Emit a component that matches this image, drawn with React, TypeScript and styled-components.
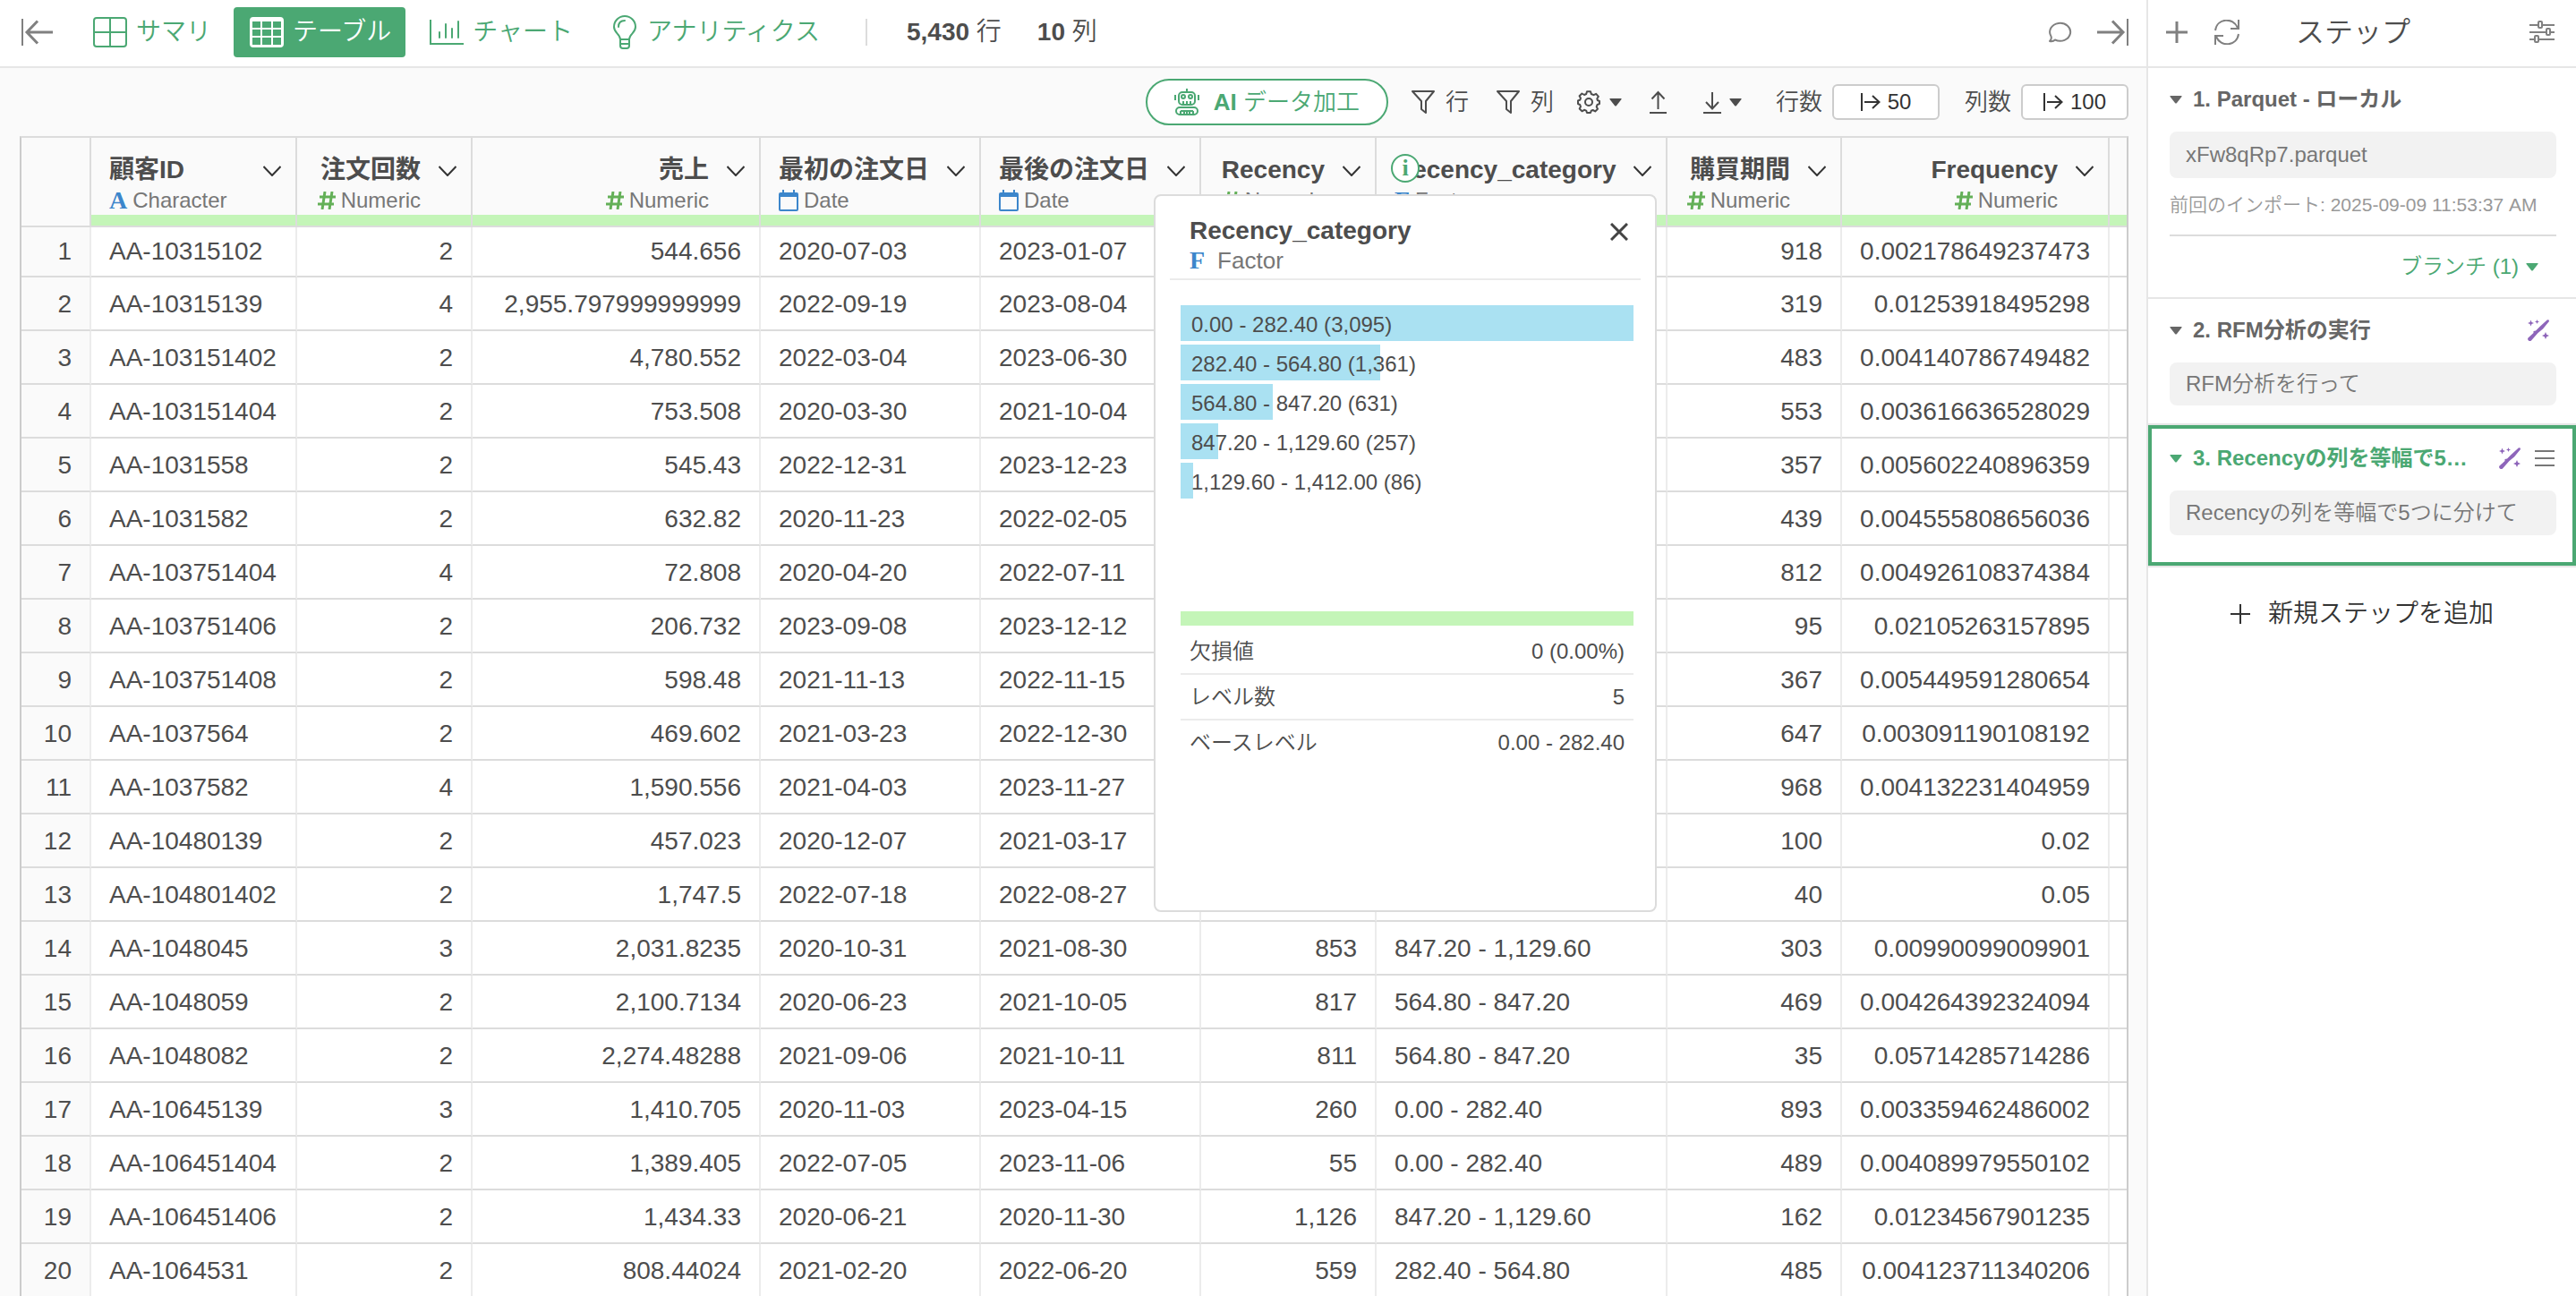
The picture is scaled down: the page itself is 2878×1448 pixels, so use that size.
import React from "react";
import styled, { createGlobalStyle, css } from "styled-components";

const color = {
  green: "#4ba873",
  text: "#4d4d4d",
  muted: "#777777",
  line: "#dcdcdc",
  soft: "#e6e6e6",
  blue: "#3c86cb",
  hash: "#64b058",
  valid: "#c4f5b8",
  bar: "#aae1f2",
  purple: "#8e65ba",
};

const GlobalStyle = createGlobalStyle`
  *, *::before, *::after { box-sizing: border-box; }
  body {
    margin: 0;
    background: #ffffff;
    color: ${color.text};
    font-family: "Liberation Sans", "Noto Sans CJK JP", sans-serif;
    font-size: 28px;
  }
  button {
    margin: 0;
    padding: 0;
    border: 0;
    background: none;
    color: inherit;
    font: inherit;
    cursor: pointer;
  }
  b { font-weight: 700; }
  svg { display: block; flex: none; }
  h1, h2, h3, p, ul, ol, dl, dd { margin: 0; padding: 0; }
`;

const Page = styled.div`
  display: grid;
  grid-template-columns: minmax(0, 1fr) 480px;
  height: 100vh;
  overflow: hidden;
`;

const Main = styled.main`
  display: flex;
  flex-direction: column;
  min-width: 0;
  overflow: hidden;
  background: #fafafa;
`;

const TopBar = styled.header`
  display: flex;
  align-items: center;
  flex: none;
  height: 76px;
  padding: 0 20px 2px 23px;
  border-bottom: 2px solid ${color.soft};
  background: #ffffff;
`;

const IconButton = styled.button`
  display: flex;
  align-items: center;
  color: #808080;
`;

const Tabs = styled.nav`
  display: flex;
  gap: 9px;
  margin-left: 27px;
`;

const Tab = styled.button<{ $active?: boolean }>`
  display: flex;
  align-items: center;
  gap: 10px;
  height: 56px;
  padding: 0 16px 0 18px;
  border-radius: 4px;
  line-height: 40px;
  font-weight: 350;
  color: ${(p) => (p.$active ? "#ffffff" : color.green)};
  background: ${(p) => (p.$active ? color.green : "transparent")};
`;

const Counts = styled.div`
  display: flex;
  align-items: center;
  gap: 40px;
  margin-left: 35px;
  line-height: 40px;
  font-weight: 350;
  &::before {
    content: "";
    width: 2px;
    height: 30px;
    margin-right: 4px;
    background: ${color.line};
  }
`;

const TopActions = styled.div`
  display: flex;
  align-items: center;
  gap: 27px;
  margin-left: auto;
`;

const Toolbar = styled.div`
  display: flex;
  align-items: center;
  justify-content: flex-end;
  gap: 26px;
  flex: none;
  height: 76px;
  padding-right: 20px;
  font-size: 26px;
  line-height: 36px;
  font-weight: 350;
`;

const AiButton = styled.button`
  display: flex;
  align-items: center;
  gap: 16px;
  height: 52px;
  padding: 0 30px;
  border: 2px solid ${color.green};
  border-radius: 26px;
  background: #ffffff;
  color: ${color.green};
`;

const ToolGroup = styled.div`
  display: flex;
  align-items: center;
  gap: 31px;
`;

const Tool = styled.button<{ $gap: number }>`
  display: flex;
  align-items: center;
  gap: ${(p) => p.$gap}px;
`;

const Limits = styled.div`
  display: flex;
  align-items: center;
  gap: 28px;
  padding-left: 12px;
`;

const Limit = styled.div`
  display: flex;
  align-items: center;
  gap: 11px;
`;

const LimitButton = styled.button`
  display: flex;
  align-items: center;
  justify-content: center;
  gap: 8px;
  width: 120px;
  height: 40px;
  border: 2px solid #cccccc;
  border-radius: 6px;
  background: #ffffff;
  color: #333333;
  font-size: 24px;
`;

const TableArea = styled.section`
  position: relative;
  flex: 1;
  min-height: 0;
  padding: 0 20px 0 22px;
`;

const Table = styled.table`
  width: 100%;
  table-layout: fixed;
  border-collapse: separate;
  border-spacing: 0;
  border: 2px solid ${color.line};
  border-left-color: #cccccc;
  border-right-color: #cccccc;
  background: #ffffff;
`;

const HeadCell = styled.th`
  position: relative;
  height: 100px;
  padding: 0;
  border-right: 2px solid ${color.line};
  border-bottom: 2px solid ${color.line};
  background: #fafafa;
  text-align: left;
  vertical-align: bottom;
  &:last-child { border-right: 0; }
`;

const HeadBody = styled.div`
  display: flex;
  flex-direction: column;
  height: 86px;
  padding-top: 18px;
`;

const HeadTitle = styled.div<{ $right?: boolean }>`
  display: flex;
  align-items: center;
  justify-content: ${(p) => (p.$right ? "flex-end" : "space-between")};
  gap: 20px;
  height: 36px;
  padding: 0 16px 0 20px;
  line-height: 36px;
  font-weight: 700;
  white-space: nowrap;
  button { padding-top: 2px; color: #333333; }
`;

const TypeLine = styled.div<{ $right?: boolean }>`
  display: flex;
  align-items: center;
  justify-content: ${(p) => (p.$right ? "flex-end" : "flex-start")};
  gap: 6px;
  height: 32px;
  padding: 0 56px 0 20px;
  color: ${color.muted};
  font-size: 24px;
  line-height: 32px;
  font-weight: 400;
`;

const ValidStrip = styled.div`
  height: 12px;
  background: ${color.valid};
`;

const Letter = styled.span`
  color: ${color.blue};
  font-family: "Liberation Serif", serif;
  font-weight: 700;
  font-size: 28px;
`;

const InfoBadge = styled.span`
  position: absolute;
  top: 18px;
  left: 16px;
  display: flex;
  align-items: center;
  justify-content: center;
  width: 32px;
  height: 32px;
  border: 2px solid ${color.green};
  border-radius: 50%;
  background: #ffffff;
  color: ${color.green};
  font-family: "Liberation Serif", serif;
  font-size: 26px;
  line-height: 28px;
  font-weight: 700;
`;

const Row = styled.tr`
  /* The first row sits slightly scrolled under the header. */
  &:first-child > * {
    height: 56px;
    padding-bottom: 2px;
  }
`;

const cell = css`
  height: 60px;
  padding: 2px 20px 0;
  border-bottom: 2px solid ${color.line};
  border-right: 2px solid #ececec;
  line-height: 32px;
  white-space: nowrap;
  font-weight: 400;
  &:last-child { border-right: 0; }
`;

const RowHead = styled.th`
  ${cell}
  background: #fafafa;
  text-align: right;
`;

const Cell = styled.td<{ $right?: boolean }>`
  ${cell}
  text-align: ${(p) => (p.$right ? "right" : "left")};
`;

const Popover = styled.aside`
  position: absolute;
  top: 65px;
  left: 1289px;
  z-index: 2;
  width: 562px;
  height: 802px;
  padding: 20px 16px;
  border: 2px solid ${color.line};
  border-radius: 8px;
  background: #ffffff;
`;

const PopHead = styled.div`
  display: flex;
  justify-content: space-between;
  align-items: flex-start;
  padding: 2px 14px 4px 22px;
  border-bottom: 2px solid #ebebeb;
  button { padding-top: 8px; color: #444444; }
`;

const PopTitle = styled.h2`
  font-size: 28px;
  line-height: 34px;
  font-weight: 700;
`;

const PopType = styled.p`
  display: flex;
  align-items: center;
  gap: 14px;
  height: 32px;
  color: ${color.muted};
  font-size: 26px;
  line-height: 32px;
`;

const PopBody = styled.div`
  padding: 28px 8px 0 12px;
  font-size: 24px;
`;

const BarList = styled.ul`
  display: flex;
  flex-direction: column;
  gap: 4px;
  height: 342px;
  list-style: none;
`;

const BarItem = styled.li`
  display: grid;
  height: 40px;
  > * { grid-area: 1 / 1; }
`;

const BarFill = styled.div`
  height: 40px;
  background: ${color.bar};
`;

const BarText = styled.span`
  padding-left: 12px;
  line-height: 44px;
`;

const PopStrip = styled.div`
  height: 16px;
  background: ${color.valid};
`;

const Stats = styled.dl`
  padding-top: 4px;
`;

const Stat = styled.div`
  display: flex;
  justify-content: space-between;
  padding: 0 10px;
  border-bottom: 2px solid #ebebeb;
  line-height: 49px;
  &:last-child { border-bottom: 0; }
  dt { font-weight: 350; }
`;

const Panel = styled.aside`
  border-left: 2px solid ${color.soft};
  background: #ffffff;
`;

const PanelHead = styled.header`
  display: flex;
  align-items: center;
  height: 76px;
  padding: 0 24px 2px 20px;
  border-bottom: 2px solid ${color.soft};
  h1 {
    flex: 1;
    padding-left: 62px;
    font-size: 32px;
    line-height: 44px;
    font-weight: 350;
  }
`;

const PanelTools = styled.div`
  display: flex;
  align-items: center;
  gap: 29px;
`;

const Steps = styled.ol`
  list-style: none;
`;

const Step = styled.li<{ $active?: boolean; $bottom: number }>`
  padding: 16px 22px ${(p) => p.$bottom}px 24px;
  border-bottom: 2px solid ${color.soft};
  ${(p) =>
    p.$active &&
    css`
      padding: 14px 18px ${p.$bottom}px 20px;
      border: 4px solid ${color.green};
      box-shadow: 0 2px 0 ${color.soft};
    `}
`;

const StepHead = styled.div<{ $right?: number }>`
  display: flex;
  align-items: center;
  gap: 16px;
  height: 38px;
  padding-right: ${(p) => p.$right ?? 2}px;
  margin-bottom: 17px;
`;

const WandButton = styled.button`
  color: ${color.purple};
`;

const StepToggle = styled.button<{ $active?: boolean }>`
  display: flex;
  align-items: center;
  gap: 12px;
  flex: 1;
  min-width: 0;
  color: ${(p) => (p.$active ? color.green : "#666666")};
`;

const StepTitle = styled.span`
  overflow: hidden;
  text-overflow: ellipsis;
  white-space: nowrap;
  font-size: 24px;
  line-height: 36px;
  font-weight: 700;
`;

const StepBox = styled.div<{ $height: number }>`
  display: flex;
  align-items: center;
  min-height: ${(p) => p.$height}px;
  padding: 0 18px;
  border-radius: 8px;
  background: #f2f2f2;
  color: ${color.muted};
  font-size: 24px;
  line-height: 38px;
  font-weight: 350;
  white-space: nowrap;
`;

const StepNote = styled.p`
  padding: 14px 0 17px;
  border-bottom: 2px solid ${color.line};
  color: #999999;
  font-size: 21px;
  line-height: 32px;
  font-weight: 350;
`;

const Branch = styled.button`
  display: flex;
  align-items: center;
  gap: 8px;
  margin: 16px 20px 0 auto;
  color: ${color.green};
  font-size: 24px;
  line-height: 36px;
  font-weight: 350;
`;

const AddStep = styled.button`
  display: flex;
  align-items: center;
  justify-content: center;
  gap: 20px;
  width: 100%;
  margin-top: 34px;
  color: #333333;
  line-height: 40px;
  font-weight: 350;
`;

const Stroke = ({ w, h, sw = 2, children }: { w: number; h: number; sw?: number; children: React.ReactNode }) => (
  <svg width={w} height={h} viewBox={`0 0 ${w} ${h}`} fill="none" stroke="currentColor" strokeWidth={sw} aria-hidden="true">
    {children}
  </svg>
);

const ToStart = () => (
  <Stroke w={36} h={30} sw={3}>
    <path d="M2 0V30" strokeWidth={2} />
    <path d="M36 15H7M19 2.500L7 15L19 27.500" />
  </Stroke>
);
const ToEnd = () => (
  <Stroke w={35} h={30} sw={3}>
    <path d="M34 0V30" strokeWidth={2} />
    <path d="M0 15H29M17 2.500L29 15L17 27.500" />
  </Stroke>
);
const SummaryIcon = () => (
  <Stroke w={38} h={34}>
    <rect x="1" y="1" width="36" height="32" rx="3" />
    <path d="M19 1V33M1 17H37" />
  </Stroke>
);
const TableIcon = () => (
  <svg width="38" height="34" viewBox="0 0 38 34" aria-hidden="true">
    <path
      fill="currentColor"
      fillRule="evenodd"
      d="M4 0H34A4 4 0 0 1 38 4V30A4 4 0 0 1 34 34H4A4 4 0 0 1 0 30V4A4 4 0 0 1 4 0ZM3 5V12H12V5ZM14 5V12H24V5ZM26 5V12H35V5ZM3 14V21H12V14ZM14 14V21H24V14ZM26 14V21H35V14ZM3 23V31H12V23ZM14 23V31H24V23ZM26 23V31H35V23Z"
    />
  </svg>
);
const ChartIcon = () => (
  <Stroke w={38} h={30}>
    <path d="M1 1V28H38" />
    <path d="M11 15V21M18 6V21M25 11V21M32 3V21" strokeLinecap="round" />
  </Stroke>
);
const BulbIcon = () => (
  <Stroke w={30} h={38}>
    <path d="M10 27C10 21 3 20 3 13A12 12 0 0 1 27 13C27 20 20 21 20 27Z" />
    <path d="M10 27V34Q10 37 13 37H17Q20 37 20 34V27M10 32H20M8 13Q8 6 15 6" strokeLinecap="round" />
  </Stroke>
);
const CommentIcon = () => (
  <Stroke w={28} h={25}>
    <path d="M2 22C4 20 4.500 19 3.500 16.500A11.500 10 0 1 1 8 20.500C6.500 22 4 22.500 2 22Z" strokeLinejoin="round" />
  </Stroke>
);
const RobotIcon = () => (
  <Stroke w={28} h={30}>
    <path d="M14 0V4" />
    <rect x="5" y="4" width="18" height="14" rx="4" />
    <path d="M1 7V13M27 7V13M10 14V18M14 14V18M18 14V18" />
    <circle cx="10" cy="9" r="2" />
    <circle cx="18" cy="9" r="2" />
    <rect x="2" y="21" width="24" height="8" rx="4" />
    <path d="M7 25H21M7 25V29M11 25V29M14 25V29M17 25V29M21 25V29" />
  </Stroke>
);
const FunnelIcon = () => (
  <Stroke w={26} h={28}>
    <path d="M1 2H25L16 13V26L11 22V13Z" strokeLinejoin="round" />
  </Stroke>
);
const GearIcon = () => (
  <Stroke w={26} h={26}>
    <path
      strokeLinejoin="round"
      d="M10.200 4L11 1.200H15L15.800 4L18.500 5.200L21.200 3.800L23.900 6.800L22.300 9.300L22.800 11L25 12V15L22.500 16L21.700 18.200L23 20.800L20.200 23.400L17.600 22L15.800 22.700L15 25H11L10.200 22.600L8 21.800L5.500 23.300L2.700 20.500L4 18L3.200 16L1 15V11.500L3.400 10.500L4 8.700L2.600 6.200L5.400 3.500L8 5Z"
    />
    <circle cx="13" cy="13" r="4" />
  </Stroke>
);
const UploadIcon = () => (
  <Stroke w={26} h={26}>
    <path d="M0 25H19M9.500 21V2M2.500 9.500L9.500 2L16.500 9.500" />
  </Stroke>
);
const DownloadIcon = () => (
  <Stroke w={26} h={26}>
    <path d="M3 25H23M13 2V20M6 13L13 20.500L20 13" />
  </Stroke>
);
const Caret = () => (
  <svg width="14" height="9" viewBox="0 0 14 9" aria-hidden="true">
    <path d="M1 0H13Q14 0 13.500 1L8 8Q7 9 6 8L0.500 1Q0 0 1 0Z" fill="currentColor" />
  </svg>
);
const LimitArrow = () => (
  <Stroke w={22} h={22}>
    <path d="M1 1V21M4 11H20M13 4L20.500 11L13 18" />
  </Stroke>
);
const Chevron = () => (
  <Stroke w={20} h={12}>
    <path d="M0.500 1L10 11L19.500 1" />
  </Stroke>
);
const HashIcon = () => (
  <Stroke w={20} h={20} sw={3}>
    <path d="M8 0L5 20M16 0L13 20M2 6H20M0 14H18" stroke={color.hash} />
  </Stroke>
);
const CalendarIcon = () => (
  <svg width="22" height="24" viewBox="0 0 22 24" fill={color.blue} aria-hidden="true">
    <path
      fillRule="evenodd"
      d="M4 0H6V3H16V0H18V3H20Q22 3 22 5V22Q22 24 20 24H2Q0 24 0 22V5Q0 3 2 3H4ZM2 8V22H20V8Z"
    />
  </svg>
);
const CloseIcon = () => (
  <Stroke w={20} h={20} sw={3}>
    <path d="M1 1L19 19M19 1L1 19" />
  </Stroke>
);
const PlusIcon = () => (
  <Stroke w={24} h={24} sw={3}>
    <path d="M12 0V24M0 12H24" />
  </Stroke>
);
const ThinPlusIcon = () => (
  <Stroke w={22} h={22}>
    <path d="M11 0V22M0 11H22" />
  </Stroke>
);
const RefreshIcon = () => (
  <Stroke w={30} h={28}>
    <path d="M2 12C4 -2 22 -3 27 9M28 0V10H19M28 16C26 30 8 31 3 19M2 28V18H11" />
  </Stroke>
);
const SlidersIcon = () => (
  <Stroke w={28} h={26}>
    <path d="M0 5H10M14 5H28M0 13H18M23 13H28M0 21H6M10 21H28" />
    <rect x="10" y="1" width="4" height="7" rx="1" />
    <rect x="19" y="9" width="4" height="7" rx="1" />
    <rect x="6" y="17" width="4" height="7" rx="1" />
  </Stroke>
);
const WandIcon = () => (
  <svg width="24" height="24" viewBox="0 0 24 24" fill="currentColor" aria-hidden="true">
    <path d="M22 0.300L23.700 0.600L24 2L17 10.500L11.500 15L4 23.500Q2.500 24.500 1 23.500Q-0.500 22 0.500 20.500L6.500 15L6.500 13L9 12.500L13.500 8Z" />
    <path d="M3.500 0.500L4.500 3L7 4L4.500 5L3.500 7.500L2.500 5L0 4L2.500 3ZM10.500 0L11.200 1.800L13 2.500L11.200 3.200L10.500 5L9.800 3.200L8 2.500L9.800 1.800ZM20 14L21.200 16.800L24 18L21.200 19.200L20 22L18.800 19.200L16 18L18.800 16.800Z" />
  </svg>
);
const MenuIcon = () => (
  <Stroke w={22} h={18}>
    <path d="M0 1H22M0 9H22M0 17H22" stroke="#777777" />
  </Stroke>
);

type Kind = "Character" | "Numeric" | "Date" | "Factor";
type Column = { name: string; kind: Kind; width: number; info?: boolean };

const columns: Column[] = [
  { name: "顧客ID", kind: "Character", width: 230 },
  { name: "注文回数", kind: "Numeric", width: 196 },
  { name: "売上", kind: "Numeric", width: 322 },
  { name: "最初の注文日", kind: "Date", width: 246 },
  { name: "最後の注文日", kind: "Date", width: 246 },
  { name: "Recency", kind: "Numeric", width: 196 },
  { name: "Recency_category", kind: "Factor", width: 325, info: true },
  { name: "購買期間", kind: "Numeric", width: 195 },
  { name: "Frequency", kind: "Numeric", width: 299 },
];

const rows: string[][] = [
  ["AA-10315102", "2", "544.656", "2020-07-03", "2023-01-07", "", "", "918", "0.002178649237473"],
  ["AA-10315139", "4", "2,955.797999999999", "2022-09-19", "2023-08-04", "", "", "319", "0.01253918495298"],
  ["AA-103151402", "2", "4,780.552", "2022-03-04", "2023-06-30", "", "", "483", "0.004140786749482"],
  ["AA-103151404", "2", "753.508", "2020-03-30", "2021-10-04", "", "", "553", "0.003616636528029"],
  ["AA-1031558", "2", "545.43", "2022-12-31", "2023-12-23", "", "", "357", "0.005602240896359"],
  ["AA-1031582", "2", "632.82", "2020-11-23", "2022-02-05", "", "", "439", "0.004555808656036"],
  ["AA-103751404", "4", "72.808", "2020-04-20", "2022-07-11", "", "", "812", "0.004926108374384"],
  ["AA-103751406", "2", "206.732", "2023-09-08", "2023-12-12", "", "", "95", "0.02105263157895"],
  ["AA-103751408", "2", "598.48", "2021-11-13", "2022-11-15", "", "", "367", "0.005449591280654"],
  ["AA-1037564", "2", "469.602", "2021-03-23", "2022-12-30", "", "", "647", "0.003091190108192"],
  ["AA-1037582", "4", "1,590.556", "2021-04-03", "2023-11-27", "", "", "968", "0.004132231404959"],
  ["AA-10480139", "2", "457.023", "2020-12-07", "2021-03-17", "", "", "100", "0.02"],
  ["AA-104801402", "2", "1,747.5", "2022-07-18", "2022-08-27", "", "", "40", "0.05"],
  ["AA-1048045", "3", "2,031.8235", "2020-10-31", "2021-08-30", "853", "847.20 - 1,129.60", "303", "0.00990099009901"],
  ["AA-1048059", "2", "2,100.7134", "2020-06-23", "2021-10-05", "817", "564.80 - 847.20", "469", "0.004264392324094"],
  ["AA-1048082", "2", "2,274.48288", "2021-09-06", "2021-10-11", "811", "564.80 - 847.20", "35", "0.05714285714286"],
  ["AA-10645139", "3", "1,410.705", "2020-11-03", "2023-04-15", "260", "0.00 - 282.40", "893", "0.003359462486002"],
  ["AA-106451404", "2", "1,389.405", "2022-07-05", "2023-11-06", "55", "0.00 - 282.40", "489", "0.004089979550102"],
  ["AA-106451406", "2", "1,434.33", "2020-06-21", "2020-11-30", "1,126", "847.20 - 1,129.60", "162", "0.01234567901235"],
  ["AA-1064531", "2", "808.44024", "2021-02-20", "2022-06-20", "559", "282.40 - 564.80", "485", "0.004123711340206"],
];

const levels = [
  { label: "0.00 - 282.40", count: 3095 },
  { label: "282.40 - 564.80", count: 1361 },
  { label: "564.80 - 847.20", count: 631 },
  { label: "847.20 - 1,129.60", count: 257 },
  { label: "1,129.60 - 1,412.00", count: 86 },
];

const stats = [
  ["欠損値", "0 (0.00%)"],
  ["レベル数", "5"],
  ["ベースレベル", "0.00 - 282.40"],
];

const KindIcon = ({ kind }: { kind: Kind }) => {
  if (kind === "Numeric") return <HashIcon />;
  if (kind === "Date") return <CalendarIcon />;
  return <Letter>{kind === "Character" ? "A" : "F"}</Letter>;
};

const ColumnHead = ({ column }: { column: Column }) => {
  const right = column.kind === "Numeric";
  return (
    <HeadCell scope="col">
      <HeadBody>
        <HeadTitle $right={right}>
          <span>{column.name}</span>
          <button aria-label={`${column.name} メニュー`}>
            <Chevron />
          </button>
        </HeadTitle>
        <TypeLine $right={right}>
          <KindIcon kind={column.kind} />
          {column.kind}
        </TypeLine>
      </HeadBody>
      <ValidStrip />
      {column.info && <InfoBadge>i</InfoBadge>}
    </HeadCell>
  );
};

const CategoryPopover = () => (
  <Popover>
    <PopHead>
      <div>
        <PopTitle>Recency_category</PopTitle>
        <PopType>
          <Letter>F</Letter>Factor
        </PopType>
      </div>
      <button aria-label="閉じる">
        <CloseIcon />
      </button>
    </PopHead>
    <PopBody>
      <BarList>
        {levels.map((l) => (
          <BarItem key={l.label}>
            <BarFill style={{ width: `${(l.count / levels[0].count) * 100}%` }} />
            <BarText>
              {l.label} ({l.count.toLocaleString("en-US")})
            </BarText>
          </BarItem>
        ))}
      </BarList>
      <PopStrip />
      <Stats>
        {stats.map(([name, value]) => (
          <Stat key={name}>
            <dt>{name}</dt>
            <dd>{value}</dd>
          </Stat>
        ))}
      </Stats>
    </PopBody>
  </Popover>
);

export default function App() {
  return (
    <Page lang="ja">
      <GlobalStyle />
      <Main>
        <TopBar>
          <IconButton aria-label="左を閉じる">
            <ToStart />
          </IconButton>
          <Tabs>
            <Tab>
              <SummaryIcon />
              サマリ
            </Tab>
            <Tab $active>
              <TableIcon />
              テーブル
            </Tab>
            <Tab>
              <ChartIcon />
              チャート
            </Tab>
            <Tab>
              <BulbIcon />
              アナリティクス
            </Tab>
          </Tabs>
          <Counts>
            <span>
              <b>5,430</b> 行
            </span>
            <span>
              <b>10</b> 列
            </span>
          </Counts>
          <TopActions>
            <IconButton aria-label="コメント">
              <CommentIcon />
            </IconButton>
            <IconButton aria-label="右を閉じる">
              <ToEnd />
            </IconButton>
          </TopActions>
        </TopBar>
        <Toolbar>
          <AiButton>
            <RobotIcon />
            <span>
              <b>AI</b> データ加工
            </span>
          </AiButton>
          <ToolGroup>
            <Tool $gap={12}>
              <FunnelIcon />行
            </Tool>
            <Tool $gap={12}>
              <FunnelIcon />列
            </Tool>
          </ToolGroup>
          <ToolGroup>
            <Tool $gap={10} aria-label="設定">
              <GearIcon />
              <Caret />
            </Tool>
            <Tool $gap={0} aria-label="アップロード">
              <UploadIcon />
            </Tool>
            <Tool $gap={6} aria-label="ダウンロード">
              <DownloadIcon />
              <Caret />
            </Tool>
          </ToolGroup>
          <Limits>
            <Limit>
              <span>行数</span>
              <LimitButton>
                <LimitArrow />
                50
              </LimitButton>
            </Limit>
            <Limit>
              <span>列数</span>
              <LimitButton>
                <LimitArrow />
                100
              </LimitButton>
            </Limit>
          </Limits>
        </Toolbar>
        <TableArea>
          <Table>
            <colgroup>
              <col width={78} />
              {columns.map((c) => (
                <col key={c.name} width={c.width} />
              ))}
              <col />
            </colgroup>
            <thead>
              <tr>
                <HeadCell />
                {columns.map((c) => (
                  <ColumnHead key={c.name} column={c} />
                ))}
                <HeadCell>
                  <ValidStrip />
                </HeadCell>
              </tr>
            </thead>
            <tbody>
              {rows.map((r, i) => (
                <Row key={r[0]}>
                  <RowHead scope="row">{i + 1}</RowHead>
                  {r.map((v, j) => (
                    <Cell key={columns[j].name} $right={columns[j].kind === "Numeric"}>
                      {v}
                    </Cell>
                  ))}
                  <Cell />
                </Row>
              ))}
            </tbody>
          </Table>
          <CategoryPopover />
        </TableArea>
      </Main>
      <Panel>
        <PanelHead>
          <PanelTools>
            <IconButton aria-label="追加">
              <PlusIcon />
            </IconButton>
            <IconButton aria-label="更新">
              <RefreshIcon />
            </IconButton>
          </PanelTools>
          <h1>ステップ</h1>
          <IconButton aria-label="表示設定">
            <SlidersIcon />
          </IconButton>
        </PanelHead>
        <Steps>
          <Step $bottom={16}>
            <StepHead>
              <StepToggle>
                <Caret />
                <StepTitle>1. Parquet - ローカル</StepTitle>
              </StepToggle>
            </StepHead>
            <StepBox $height={52}>xFw8qRp7.parquet</StepBox>
            <StepNote>前回のインポート: 2025-09-09 11:53:37 AM</StepNote>
            <Branch>
              ブランチ (1)
              <Caret />
            </Branch>
          </Step>
          <Step $bottom={20}>
            <StepHead $right={8}>
              <StepToggle>
                <Caret />
                <StepTitle>2. RFM分析の実行</StepTitle>
              </StepToggle>
              <WandButton aria-label="AIで編集">
                <WandIcon />
              </WandButton>
            </StepHead>
            <StepBox $height={48}>RFM分析を行って</StepBox>
          </Step>
          <Step $active $bottom={30}>
            <StepHead>
              <StepToggle $active>
                <Caret />
                <StepTitle>3. Recencyの列を等幅で5つに分けて</StepTitle>
              </StepToggle>
              <WandButton aria-label="AIで編集">
                <WandIcon />
              </WandButton>
              <button aria-label="メニュー">
                <MenuIcon />
              </button>
            </StepHead>
            <StepBox $height={50}>Recencyの列を等幅で5つに分けて</StepBox>
          </Step>
        </Steps>
        <AddStep>
          <ThinPlusIcon />
          新規ステップを追加
        </AddStep>
      </Panel>
    </Page>
  );
}
